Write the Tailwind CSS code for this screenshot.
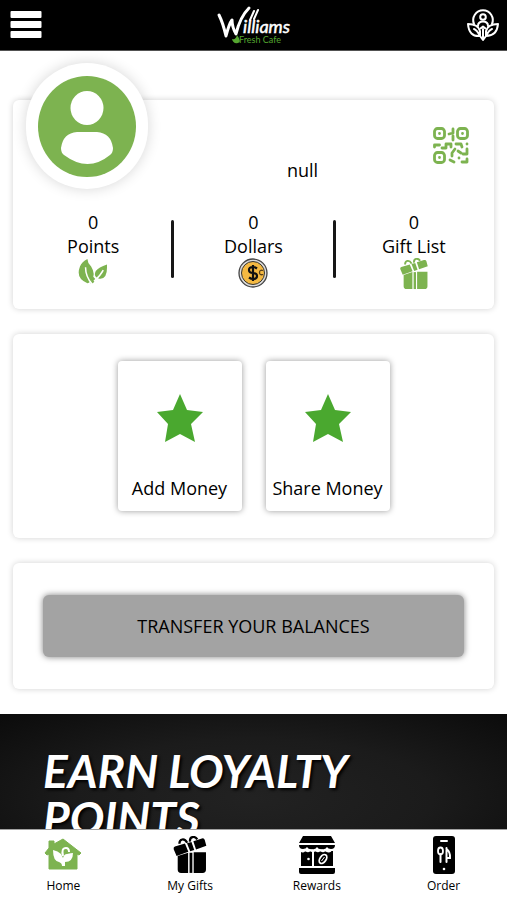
<!DOCTYPE html>
<html lang="en">
<head>
<meta charset="utf-8">
<meta name="viewport" content="width=device-width, initial-scale=1">
<title>Williams Fresh Cafe</title>
<script src="https://cdn.jsdelivr.net/npm/@tailwindcss/browser@4"></script>
</head>
<body class="flex h-screen flex-col bg-white font-['Trebuchet_MS','Open_Sans',sans-serif] text-black">
<svg class="hidden" aria-hidden="true">
  <symbol id="gift" viewBox="0 0 30 34">
    <g fill="currentColor"><path d="M4 18 13.300 15v18H7q-3 0-3-3zM18.300 14.500h11v15.500q0 3-3 3h-8z"/><path d="M14.600 15h2.500v18h-2.500z"/><path d="M1.500 9.500 10.500 6.800l3 7.300-10.500 3.700-2.600-6q-.4-1.800 1.100-2.300zM18 4.600l7.600-2.400q2-.6 2.600 1.300l1.400 5.300-9.200 3.200z"/><path d="m12.300 6.500 4-1.200 2.500 7.200-3.600 1.200z"/></g>
    <path d="M12.500 6C10 1.500 5.500 2.500 5.500 7M15 5C14.500 0 19.500-.2 21.500 3" fill="none" stroke="currentColor" stroke-width="2"/>
  </symbol>
  <symbol id="star" viewBox="0 0 48 50"><path fill="#4aa82f" d="m24 1 7 16 16 2-12 12 4 18-15-8-15 8 3-18L1 19l16-2z"/></symbol>
</svg>

<header class="flex h-[51px] shrink-0 items-center justify-between border-b border-neutral-600 bg-black pr-2 pl-2.5">
  <button type="button" aria-label="Open menu" class="w-12 text-white">
    <svg viewBox="0 0 31 28" class="h-7 w-8" fill="currentColor"><rect width="31" height="7" y="0" rx="1"/><rect width="31" height="7" y="10" rx="1"/><rect width="31" height="7" y="20" rx="1"/></svg>
  </button>
  <a href="#" aria-label="Williams Fresh Cafe">
    <svg viewBox="0 0 80 46" class="h-[46px] w-20 overflow-visible">
      <path d="M4 13q4 8 7 21Q14 22 17 18q0 7 4 14Q25 15 34 6" fill="none" stroke="white" stroke-width="3" stroke-linecap="round" stroke-linejoin="round"/>
      <text x="28" y="31" font-family="Lato, sans-serif" font-style="italic" font-size="18" fill="white" stroke="white" stroke-width=".5">illiams</text>
      <path d="M35 18 39 9M39 17 43 8" stroke="white" stroke-width="2" stroke-linecap="round"/>
      <path d="M17 37q4 1 5-4 5 7 1 8-5 1-6-4z" fill="#55a630"/>
      <text x="24" y="41" font-family="Lato, sans-serif" font-size="9" fill="#55a630">Fresh Cafe</text>
    </svg>
  </a>
  <button type="button" aria-label="Account" class="flex w-12 justify-end text-white">
    <svg viewBox="0 0 32 34" class="h-[34px] w-8" fill="none" stroke="currentColor" stroke-width="2" stroke-linejoin="round" stroke-linecap="round">
      <path d="M7 16a9.800 9.800 0 1 1 18 0"/><circle cx="16" cy="9" r="2.800"/><path d="M11 18q0-4.500 5-4.500t5 4.500M13.500 20.500l2.500-2 2.500 2"/>
      <path d="M1 16q10 0 12 7v5Q2 29 1 16zM31 16q-10 0-12 7v5q11 0 12-12zM7 21q3 1 6 7M25 21q-3 1-6 7M13 28l3 4 3-4M16 21v10"/>
    </svg>
  </button>
</header>

<main class="min-h-0 flex-1 overflow-y-auto [scrollbar-width:none]">
  <div class="flex flex-col gap-[25px] px-[13px] pt-[49px] pb-[25px]">
    <section aria-label="Profile" class="relative h-[209px] rounded-md bg-white shadow-[0_0_6px_rgba(0,0,0,0.18)]">
      <div class="absolute -top-[37px] left-[13px] flex h-[126px] w-[122px] items-center justify-center rounded-full bg-white shadow-[0_0_14px_rgba(0,0,0,0.16)]">
        <svg viewBox="0 0 98 101" class="h-[101px] w-[98px]" role="img" aria-label="Profile picture">
          <ellipse cx="49" cy="50.500" rx="49" ry="50.500" fill="#7db350"/><ellipse cx="49" cy="32" rx="16.500" ry="17" fill="white"/>
          <path d="M39 56h20q14 1 16 16 0 5-3 7-22 18-46 0-3-2-3-7 2-15 16-16z" fill="white"/>
        </svg>
      </div>
      <button type="button" aria-label="Show QR code" class="absolute top-[27px] right-[25px]">
        <svg viewBox="0 0 36 37" class="h-[37px] w-9" fill="none" stroke="#7db350" stroke-width="2.800" stroke-linecap="round" stroke-linejoin="round">
          <rect x="1.500" y="1.500" width="10" height="10" rx="3"/><rect x="24.500" y="1.500" width="10" height="10" rx="3"/><rect x="1.500" y="25.500" width="10" height="10" rx="3"/>
          <path d="M6.500 6.500v.1M29.500 6.500v.1M6.500 30.500v.1M20 2v4l-4 1M20 9v4M1.500 20v-2h5M9 21h4v-4h5v3M23 17h5l1 3M34 17v.1M22 22l-3 4v3M25 24l3 2M34 22v5h-4M17 33l4 2M26 31v.1M29 35h5v-3"/>
        </svg>
      </button>
      <p class="pt-[58px] pl-[98px] text-center text-[18px] leading-6">null</p>
      <div class="relative mt-7 grid grid-cols-3 text-center text-[18px] leading-6">
        <div class="flex flex-col items-center">
          <span>0</span><span>Points</span>
          <svg viewBox="0 0 32 29" class="h-[27px] w-8 shrink-0" fill="#7db350"><path d="M10 1q0 4 4 8 5 8 1 14-3 4-5 4Q-3 22 2 9q2-5 8-8zM31 7q1 17-9 15-6-2-3-8 3-4 12-7zM16 20l3 3-3 4h-3z"/><path d="M8 10q0 10 7 18M17 25q7-6 10-12" fill="none" stroke="white" stroke-width="1.600"/></svg>
        </div>
        <div class="flex flex-col items-center">
          <span>0</span><span>Dollars</span>
          <svg viewBox="0 0 30 30" class="h-[30px] w-[30px] shrink-0"><circle cx="15" cy="15" r="14" fill="#ddd" stroke="#444" stroke-width="1.300"/><circle cx="15" cy="15" r="11.500" fill="#f4b942" stroke="#333"/><path d="M19 10.500Q17 9 15 9q-4 0-4 3t4 3 4 3-4 3q-2 0-4-1.500M15 7v16" fill="none" stroke="#111" stroke-width="2.200"/><path d="M25 12.500q-3.500-1-3.500 2t3.500 2" fill="none" stroke="#59401a" stroke-width="1.300"/></svg>
        </div>
        <div class="flex flex-col items-center">
          <span>0</span><span>Gift List</span>
          <svg class="h-[32px] w-[30px] shrink-0 text-[#7db350]"><use href="#gift"/></svg>
        </div>
        <div aria-hidden="true" class="absolute inset-x-0 top-2.5 flex h-[58px] justify-evenly"><i class="w-[3px] rounded-full bg-neutral-900"></i><i class="w-[3px] rounded-full bg-neutral-900"></i></div>
      </div>
    </section>

    <section aria-label="Money" class="flex justify-center gap-6 rounded-md bg-white py-[27px] shadow-[0_0_6px_rgba(0,0,0,0.18)]">
      <button type="button" class="flex h-[150px] w-[124px] flex-col items-center justify-between rounded-sm bg-white pt-8 pb-[11px] text-[18px] leading-6 whitespace-nowrap shadow-[0_0_6px_rgba(0,0,0,0.4)]"><svg class="h-[50px] w-12"><use href="#star"/></svg>Add Money</button>
      <button type="button" class="flex h-[150px] w-[124px] flex-col items-center justify-between rounded-sm bg-white pt-8 pb-[11px] text-[18px] leading-6 whitespace-nowrap shadow-[0_0_6px_rgba(0,0,0,0.4)]"><svg class="h-[50px] w-12"><use href="#star"/></svg>Share Money</button>
    </section>

    <section aria-label="Transfer" class="rounded-md bg-white px-[30px] py-8 shadow-[0_0_6px_rgba(0,0,0,0.18)]">
      <button type="button" class="h-[62px] w-full rounded-md bg-[#a3a3a3] text-[18px] shadow-[0_0_6px_rgba(0,0,0,0.5)]">TRANSFER YOUR BALANCES</button>
    </section>
  </div>

  <section class="bg-[radial-gradient(ellipse_at_center,#222_0%,#1b1b1b_50%,#0b0b0b_100%)] px-[43px] pt-[33px] pb-10">
    <h2 class="font-[Lato,sans-serif] text-[46px] leading-[47px] font-bold text-white italic [text-shadow:2px_2px_3px_#000]">EARN LOYALTY<br>POINTS</h2>
  </section>
</main>

<nav aria-label="Main" class="z-10 grid h-[71px] shrink-0 grid-cols-4 border-t border-neutral-400 bg-white text-center text-[12px] leading-4">
  <a href="#" class="flex flex-col items-center gap-1 pt-1.5">
    <svg viewBox="0 0 38 38" class="h-[38px] w-[38px]"><path d="M1 17 5 12V5h5v3l9-5 18 14-2 2-2-1v15H5V18l-2 1z" fill="#7db350" stroke="#7db350" stroke-linejoin="round"/><path d="M18 30q0-3-3-4-6-1-6-12 5 1 8 4l2 4q1-4 4-4 4-1 6-1 0 9-8 9v4z" fill="white"/><path d="M19 20q-2-8 3-8 3 0 3 4" fill="none" stroke="white" stroke-width="2"/></svg>Home</a>
  <a href="#" class="flex flex-col items-center gap-1 pt-1.5"><svg class="h-[38px] w-[34px]"><use href="#gift"/></svg>My Gifts</a>
  <a href="#" class="flex flex-col items-center gap-1 pt-1.5">
    <svg viewBox="0 0 38 38" class="h-[38px] w-[38px]"><path d="M5 0h28l4 7H1zM1 9h36q0 4-4 4-3 0-4-2-2 3-5 2-3 1-5-2-2 3-5 2-3 1-5-2-1 2-4 2-4 0-4-4zM3 15h11v15H3zM16 15h19v15H16zM1 32h36v4q0 2-2 2H3q-2 0-2-2z"/><path d="M3 15q2 2 4-1 3 3 5 0 3 3 5 0 3 3 5 0 3 3 5 0 3 3 6 1" fill="none" stroke="white" stroke-width="1.500"/><circle cx="10.500" cy="23" r="1.300" fill="white"/><ellipse cx="25" cy="23" rx="3" ry="5" transform="rotate(35 25 23)" fill="none" stroke="white" stroke-width="1.800"/><path d="m23.500 25 3-4" stroke="white"/></svg>Rewards</a>
  <a href="#" class="flex flex-col items-center gap-1 pt-1.5">
    <svg viewBox="0 0 22 38" class="h-[38px] w-[22px]"><rect width="22" height="38" rx="3"/><path d="M8 5h6M7.500 18v8M13.500 12v14M13.500 13q4 3 3.500 9h-3" fill="none" stroke="white" stroke-width="2" stroke-linecap="round"/><ellipse cx="7.500" cy="15" rx="2.500" ry="3.500" fill="none" stroke="white" stroke-width="1.800"/><circle cx="11" cy="33" r="1.300" fill="white"/></svg>Order</a>
</nav>
</body>
</html>
